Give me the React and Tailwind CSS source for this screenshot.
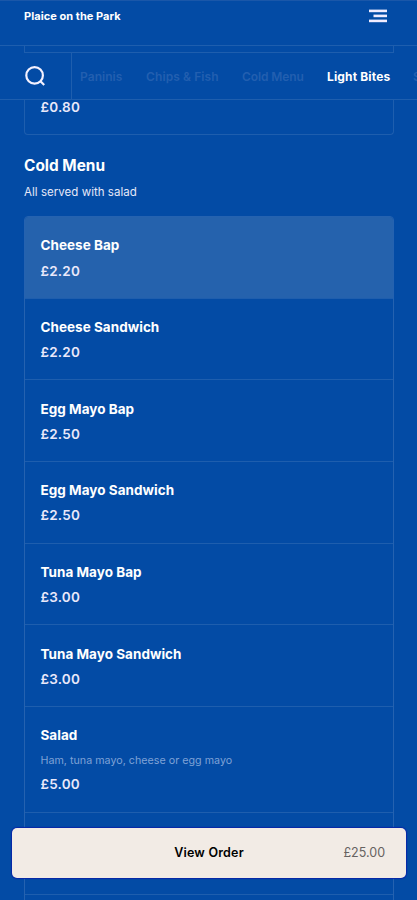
const categories = [
  { name: 'Paninis', style: 'w-[43px] tracking-[0.05px]' },
  { name: 'Chips & Fish', style: 'w-[73px] tracking-[0.1px]' },
  { name: 'Cold Menu', style: 'w-[62px] tracking-[-0.1px]' },
];

const items = [
  { name: 'Cheese Bap', price: '£2.20', active: true },
  { name: 'Cheese Sandwich', price: '£2.20' },
  { name: 'Egg Mayo Bap', price: '£2.50' },
  { name: 'Egg Mayo Sandwich', price: '£2.50' },
  { name: 'Tuna Mayo Bap', price: '£3.00' },
  { name: 'Tuna Mayo Sandwich', price: '£3.00' },
  { name: 'Salad', price: '£5.00', note: 'Ham, tuna mayo, cheese or egg mayo' },
];

function Header() {
  return (
    <header className="flex h-[46px] shrink-0 items-start justify-between border-b border-t border-b-[#1e5eae] border-t-[#1a57a9] pl-6 pr-[30px]">
      <h1 className="pt-[7px] text-[11px] font-bold leading-4 tracking-[0.05px]">Plaice on the Park</h1>
      <svg className="mt-2 h-[14px] w-[18px]" viewBox="0 0 18 14" fill="#f1ecff">
        <rect x="0" y="0.6" width="18" height="2.6" />
        <rect x="4.5" y="5.6" width="13.5" height="2.6" />
        <rect x="0" y="10.6" width="18" height="2.6" />
      </svg>
    </header>
  );
}

function CategoryNav() {
  return (
    <nav className="flex h-[47px] shrink-0 items-stretch overflow-hidden whitespace-nowrap border-b border-[#1e5eae]">
      <div className="flex w-[72px] shrink-0 items-center border-r border-[#1e5eae] pl-6">
        <svg className="h-6 w-6" viewBox="0 0 24 24" fill="none" stroke="#f4f1ff" strokeWidth="2.2">
          <circle cx="10.6" cy="11.4" r="8.3" />
          <path d="M16 16.8 20.2 21" />
        </svg>
      </div>
      <div className="flex items-center gap-[23px] pl-2 pt-0.5 text-[12px] font-semibold text-[#225fb0]">
        {categories.map((c) => (
          <span key={c.name} className={c.style}>{c.name}</span>
        ))}
        <span className="w-[63px] font-bold tracking-[0.15px] text-white">Light Bites</span>
        <span>Sides</span>
      </div>
    </nav>
  );
}

function MenuItem({ item }) {
  return (
    <li
      className={`flex flex-col border-b border-[#1e5eae] pl-[15.5px] pr-4 ${
        item.note ? 'h-[106px]' : 'h-[81.67px]'
      } ${item.active ? 'rounded-t-[3px] bg-[#2562ad] pt-[17.5px]' : 'pt-[18.5px]'}`}
    >
      <h3 className="text-[13.5px] font-bold leading-5 tracking-[0.03px]">{item.name}</h3>
      {item.note && <p className="mt-1.5 text-[10.7px] leading-5 tracking-[0.02px] text-[#7fa2d6]">{item.note}</p>}
      <p
        className={`text-[13.5px] font-semibold leading-5 tracking-[0.2px] text-[#e9e8fa] ${
          item.note ? 'mt-[3px]' : item.active ? 'mt-1.5' : 'mt-[5px]'
        }`}
      >
        {item.price}
      </p>
    </li>
  );
}

function OrderBar() {
  return (
    <button className="absolute left-3 right-[11px] top-[828px] flex h-[49.5px] items-center rounded-[5px] bg-[#f2ebe5] px-[21px] pt-[1.5px] text-black shadow-[0_0_1px_1px_#0826a8]">
      <span className="flex-1" />
      <span className="text-[12.5px] font-semibold tracking-[0.2px]">View Order</span>
      <span className="flex-1 text-right text-[12.5px] text-[#666260]">£25.00</span>
    </button>
  );
}

export default function App() {
  return (
    <div className="relative flex h-[900px] w-[417px] flex-col overflow-hidden bg-[#034ba5] font-['Inter',sans-serif] text-white">
      <Header />
      <div className="ml-6 mr-[23px] h-[7px] shrink-0 border-x border-b border-[#1e5eae]" />
      <CategoryNav />
      <section className="ml-6 mr-[23px] h-[35px] shrink-0 rounded-b-[4px] border border-t-0 border-[#1e5eae] pl-[15.5px]">
        <p className="-mt-[3px] text-[13.5px] font-semibold leading-5 tracking-[0.2px] text-[#e9e8fa]">£0.80</p>
      </section>
      <main className="ml-6 mr-[23px] shrink-0 pt-[19px]">
        <h2 className="text-[15.4px] font-bold leading-6">Cold Menu</h2>
        <p className="mt-1 text-[11.5px] leading-5 tracking-[0.04px] text-[#e6e8f8]">All served with salad</p>
        <ul className="mt-[14px] h-[700px] rounded-t-[4px] border border-[#2562b0]">
          {items.map((item) => (
            <MenuItem key={item.name} item={item} />
          ))}
          <li className="h-[81.67px] border-b border-[#1e5eae]" />
        </ul>
      </main>
      <OrderBar />
    </div>
  );
}
